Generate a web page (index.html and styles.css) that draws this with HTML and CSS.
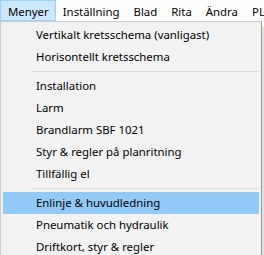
FILE: index.html
```html
<!DOCTYPE html>
<html lang="sv">
<head>
    <meta charset="UTF-8">
    <title>Menyer</title>
    <link rel="stylesheet" href="styles.css">
</head>
<body>

    <div class="menubar">
        <div class="menubar-item active">Menyer</div>
        <div class="menubar-item">Inställning</div>
        <div class="menubar-item">Blad</div>
        <div class="menubar-item">Rita</div>
        <div class="menubar-item">Ändra</div>
        <div class="menubar-item">PLå</div>
    </div>

    <div class="workspace">
        <!-- dropdown for "Menyer" -->
        <div class="dropdown">
            <div class="menu-row">Vertikalt kretsschema (vanligast)</div>
            <div class="menu-row">Horisontellt kretsschema</div>
            <div class="menu-sep"></div>
            <div class="menu-row">Installation</div>
            <div class="menu-row">Larm</div>
            <div class="menu-row">Brandlarm SBF 1021</div>
            <div class="menu-row">Styr &amp; regler på planritning</div>
            <div class="menu-row">Tillfällig el</div>
            <div class="menu-sep"></div>
            <div class="menu-row hover">Enlinje &amp; huvudledning</div>
            <div class="menu-row">Pneumatik och hydraulik</div>
            <div class="menu-row">Driftkort, styr &amp; regler</div>
        </div>
    </div>

</body>
</html>
```

FILE: styles.css
```css
body {
    margin: 0;
    width: 264px;
    height: 255px;
    overflow: hidden;
    background: #ffffff;
    font-family: "Segoe UI", "Noto Sans", sans-serif;
    font-size: 11.4px;
    color: #000000;
}
.menubar {
    display: flex;
    height: 21px;
    background: #ffffff;
    white-space: nowrap;
    overflow: hidden;
}
.menubar-item {
    padding: 0 6px 0 7px;
    line-height: 21px;
    border: 1px solid transparent;
    box-sizing: border-box;
    height: 21px;
    flex-shrink: 0;
}
.menubar-item + .menubar-item {
    padding: 0 6px;
}
.menubar-item.active {
    background-color: #cce8ff;
    border-color: #99d1ff;
}
.workspace {
    position: relative;
    height: 234px;
    background: linear-gradient(#ffffff, #ffffff) no-repeat,
                linear-gradient(to right, #c8c8c8, #e4e1da);
    background-size: 100% 6px, 100% 100%;
}
.dropdown {
    position: absolute;
    left: 0;
    top: 0;
    width: 262px;
    box-sizing: border-box;
    background: #f2f2f2;
    border: 1px solid #cccccc;
    border-right-color: #9a9a9a;
    padding: 2px 2px 0 2px;
}
.menu-row {
    height: 22px;
    line-height: 22px;
    padding-left: 33px;
    white-space: nowrap;
}
.menu-row.hover {
    background-color: #91c9f7;
}
.menu-sep {
    height: 1px;
    background: #d7d7d7;
    margin: 3px 0 3px 29px;
}
```
